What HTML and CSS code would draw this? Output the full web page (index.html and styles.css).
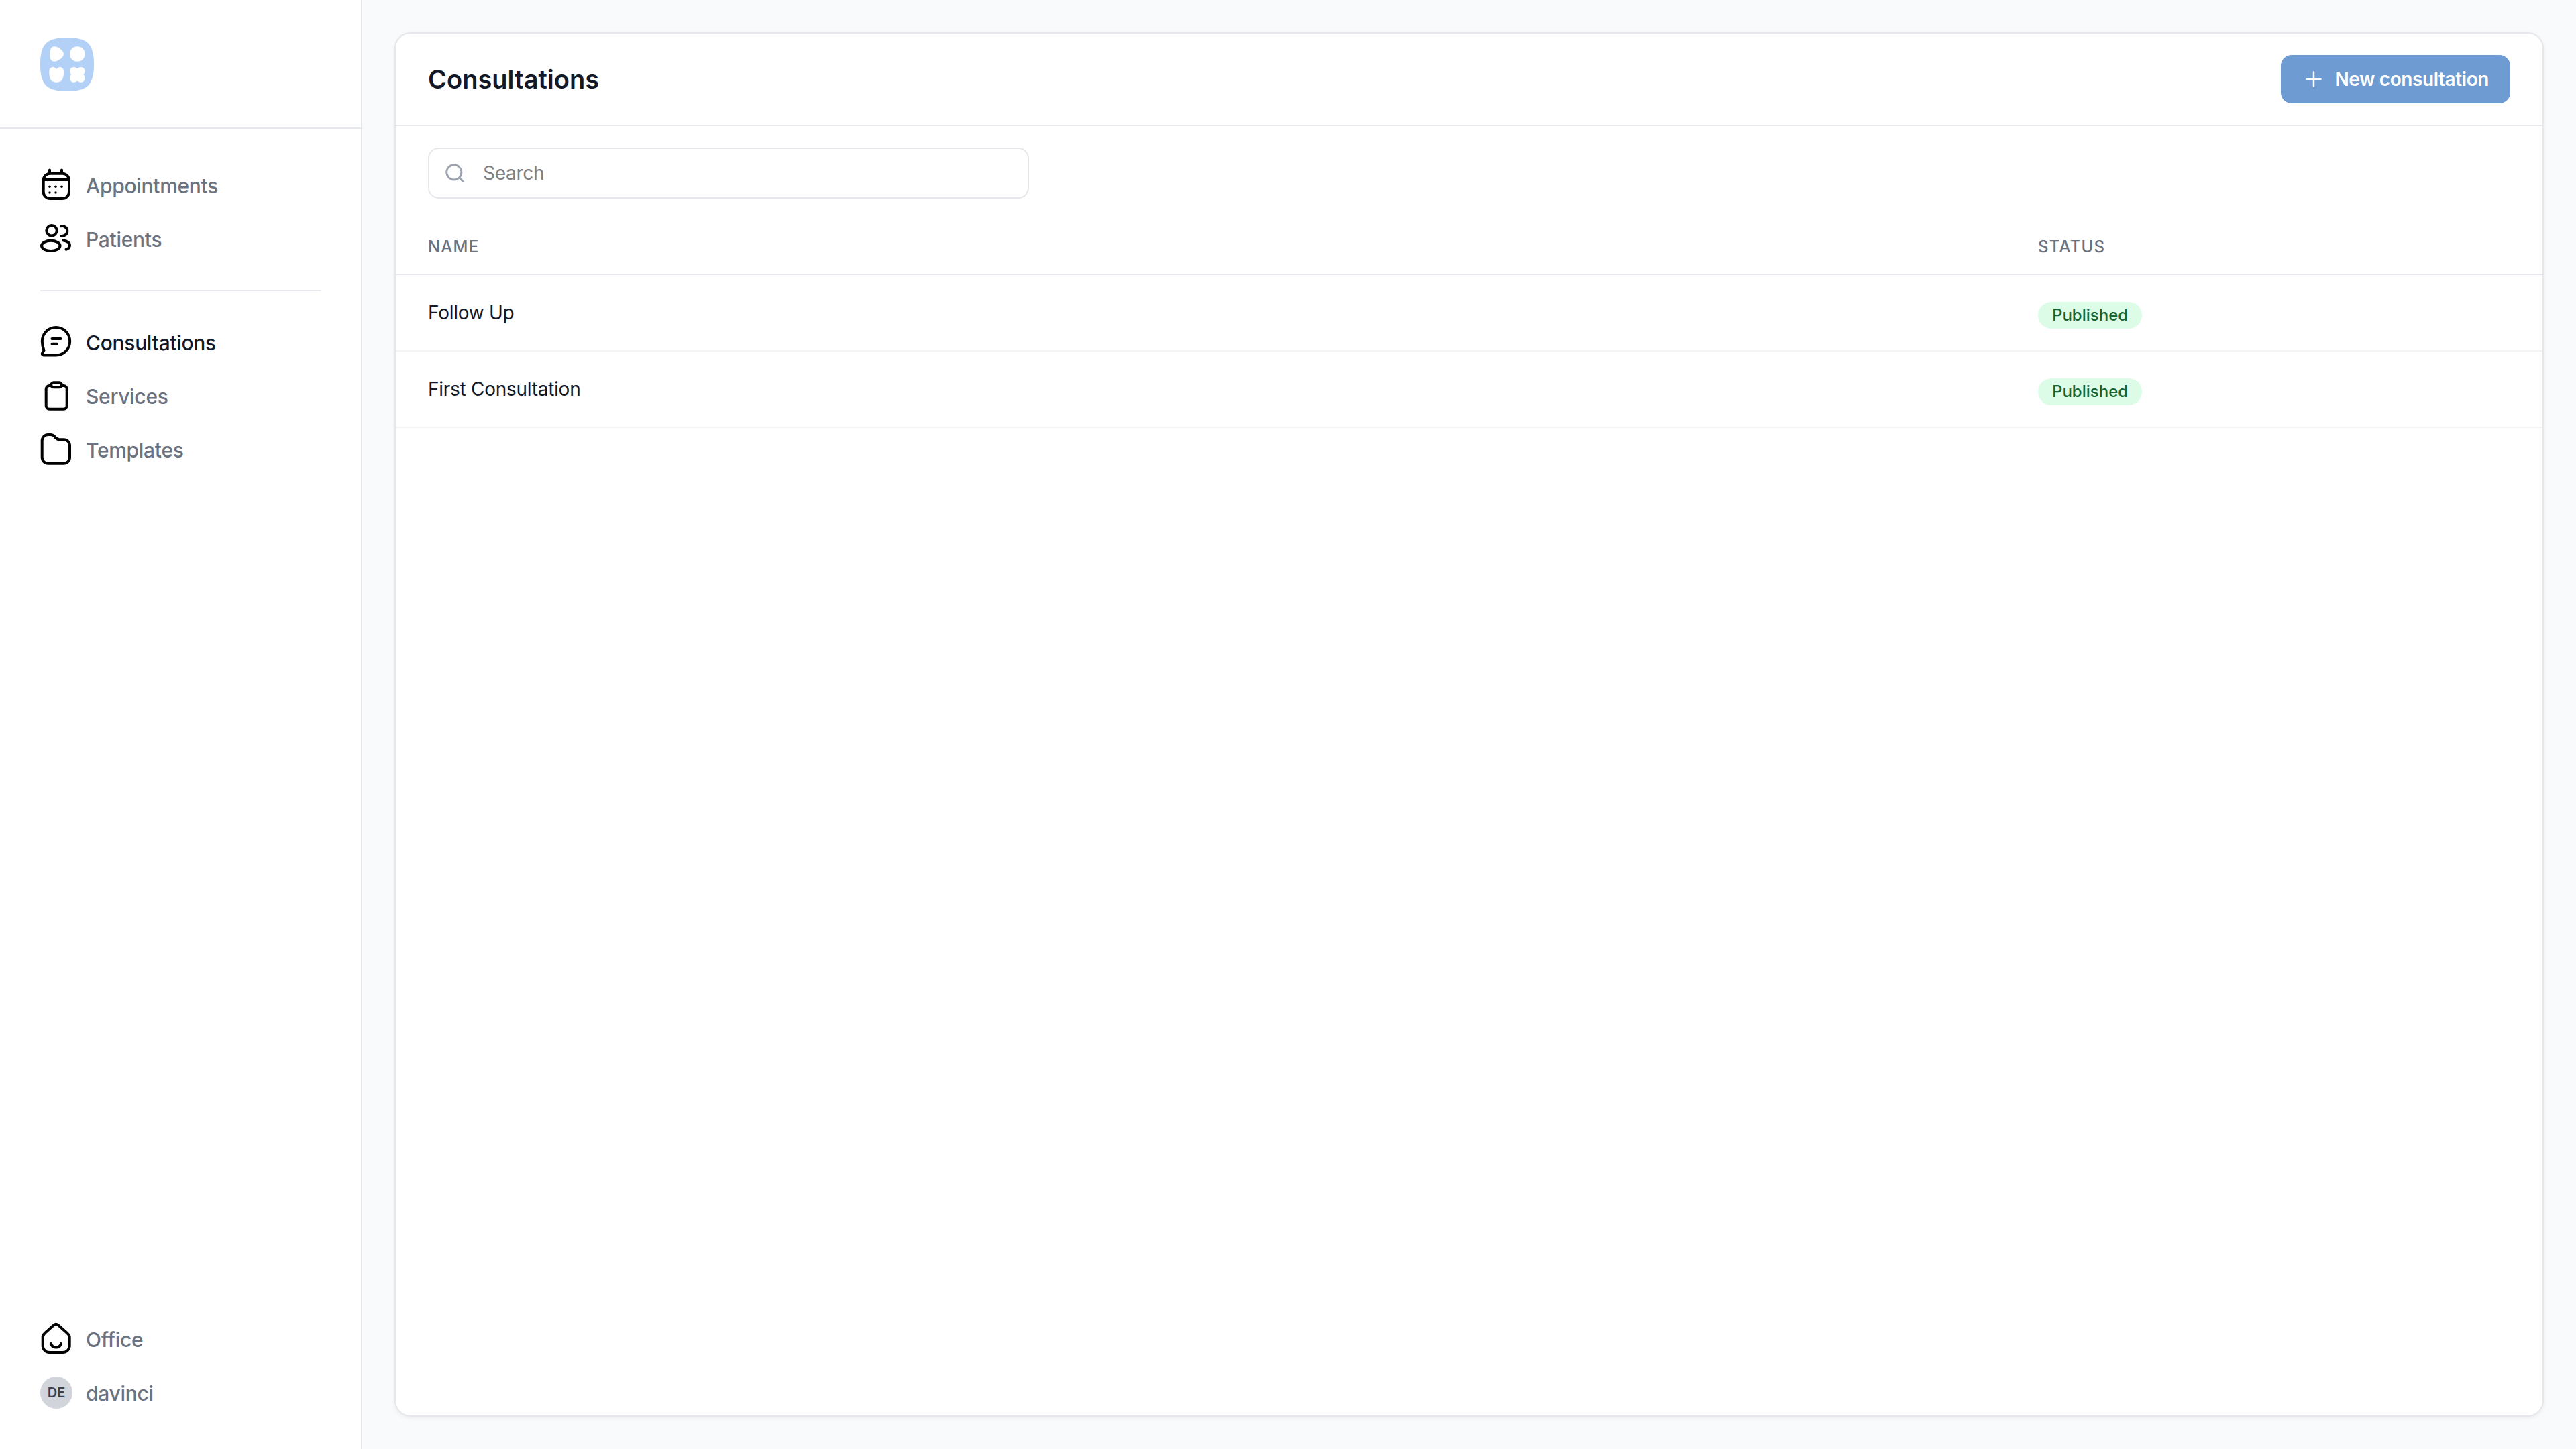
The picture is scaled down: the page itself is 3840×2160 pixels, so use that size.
FILE: index.html
```html
<!DOCTYPE html>
<html lang="en">
<head>
<meta charset="utf-8">
<title>Consultations</title>
<link rel="stylesheet" href="styles.css">
</head>
<body>
<div class="app">
  <aside class="sidebar">
    <div class="brand">
      <svg class="logo" viewBox="0 0 80 80">
        <path fill="#b3d1f6" d="M40 0C70 0 80 9 80 40C80 71 70 80 40 80C10 80 0 71 0 40C0 9 10 0 40 0Z"/>
        <path fill="#fff" d="M21 13.300C27 13.300 35 20 35 24.500C35 29 27 35.700 20.500 35.700C16 35.700 14.300 31 14.300 24.500C14.300 18 16 13.300 21 13.300Z"/>
        <ellipse fill="#fff" cx="55.300" cy="24.500" rx="11.400" ry="11.200"/>
        <path fill="#fff" d="M13.300 51C13.300 46 16 44 19 44C21.500 44 23 45.500 24.200 47C25.400 45.500 27 44 29.500 44C33 44 35 47 35 51C35 62 32 66.700 24.200 66.700C16.400 66.700 13.300 62 13.300 51Z"/>
        <path fill="#fff" d="M50 44C52.500 44 54 45 55.300 46.300C56.600 45 58.200 44 60.500 44C64 44 66.700 46.800 66.700 50C66.700 52.400 65.600 54 64.500 55.300C65.600 56.700 66.700 58.200 66.700 60.700C66.700 64 64 66.700 60.500 66.700C58.200 66.700 56.600 65.600 55.300 64.400C54 65.600 52.500 66.700 50 66.700C46.600 66.700 44 64 44 60.700C44 58.200 45 56.700 46.200 55.300C45 54 44 52.400 44 50C44 46.800 46.600 44 50 44Z"/>
      </svg>
    </div>
    <nav class="nav">
      <a class="nav-item">
        <svg class="icon" viewBox="0 0 48 48"><rect x="4.700" y="6.700" width="38.300" height="37.300" rx="10"/><path d="M14 1.500V5.500M32 1.500V5.500M4.700 16H43"/><g class="dots"><circle cx="14" cy="26.300" r="1.700"/><circle cx="23" cy="26.300" r="1.700"/><circle cx="32" cy="26.300" r="1.700"/><circle cx="14" cy="35" r="1.700"/><circle cx="23" cy="35" r="1.700"/></g></svg>
        <span class="label">Appointments</span>
      </a>
      <a class="nav-item">
        <svg class="icon" viewBox="0 0 48 48"><circle cx="17" cy="11.800" r="7.700"/><ellipse cx="15.800" cy="34.300" rx="13.800" ry="7.600"/><path d="M31 5.200C36.500 4.500 40.300 8 40.300 12.500C40.300 17 36.500 20.500 31 20M34.500 26.500C40 27.500 44 30 44 33.300C44 36.300 42 39 38.500 39.700"/></svg>
        <span class="label">Patients</span>
      </a>
      <div class="nav-divider"></div>
      <a class="nav-item active">
        <svg class="icon" viewBox="0 0 48 48"><path d="M23.500 43.500H5.500C3 43.500 2.200 41.500 3.300 39.800L5.500 36.200C3.800 32.500 2.800 27.500 2.800 22.800A20.700 20.700 0 1 1 23.500 43.500Z"/><path d="M17.500 19H30.500M17.500 26.700H25"/></svg>
        <span class="label">Consultations</span>
      </a>
      <a class="nav-item">
        <svg class="icon" viewBox="0 0 48 48"><rect x="8.700" y="9" width="31" height="34.700" rx="5"/><rect class="white" x="16.300" y="4.300" width="15.700" height="7" rx="3.500"/></svg>
        <span class="label">Services</span>
      </a>
      <a class="nav-item">
        <svg class="icon" viewBox="0 0 48 48"><path d="M2.700 11A9 9 0 0 1 11.700 2H15C18.500 2 20 3 21.500 5C23.500 7.800 25 9.300 28.500 9.300H35A9 9 0 0 1 44 18.300V35.700A9 9 0 0 1 35 44.700H11.700A9 9 0 0 1 2.700 35.700Z"/></svg>
        <span class="label">Templates</span>
      </a>
    </nav>
    <div class="nav nav-bottom">
      <a class="nav-item">
        <svg class="icon" viewBox="0 0 48 48"><path d="M20.500 3Q23.500 .8 26.500 3L40 15Q43.700 18 43.700 22V34A10 10 0 0 1 33.700 44H13.700A10 10 0 0 1 3.700 34V22Q3.700 18 7 15Z"/><path d="M15.800 31C17.300 35 20.300 36.500 23.500 36.500S29.700 35 31.200 31"/></svg>
        <span class="label">Office</span>
      </a>
      <a class="nav-item">
        <span class="avatar">DE</span>
        <span class="label">davinci</span>
      </a>
    </div>
  </aside>
  <main class="main">
    <section class="card">
      <header class="card-head">
        <h1>Consultations</h1>
        <button class="btn">
          <svg class="plus" viewBox="0 0 24 24"><path d="M12 1.500V22.500M1.500 12H22.500"/></svg>
          New consultation
        </button>
      </header>
      <div class="toolbar">
        <div class="search">
          <svg class="search-icon" viewBox="0 0 24 24"><circle cx="11" cy="11" r="9.500"/><path d="M18 18L22.500 23"/></svg>
          <span>Search</span>
        </div>
      </div>
      <div class="table">
        <div class="row head"><div>Name</div><div>Status</div></div>
        <div class="row item"><div class="name">Follow Up</div><div><span class="badge">Published</span></div></div>
        <div class="row item"><div class="name">First Consultation</div><div><span class="badge">Published</span></div></div>
      </div>
    </section>
  </main>
</div>
</body>
</html>
```
FILE: styles.css
```css
* { box-sizing: border-box; }
html, body { margin: 0; height: 100%; }
body { font-family: Inter, "Liberation Sans", sans-serif; background: #f9fafb; color: #111827; }
.app { display: flex; width: 3840px; height: 2160px; }

.sidebar { width: 540px; flex: none; background: #fff; border-right: 2px solid #e5e7eb; display: flex; flex-direction: column; }
.brand { height: 192px; flex: none; padding: 56px 0 0 60px; border-bottom: 2px solid #e5e7eb; }
.logo { display: block; width: 80px; height: 80px; }
.nav { padding: 44px 60px 0; }
.nav-bottom { margin-top: auto; padding: 0 60px 44px; }
.nav-item { display: flex; align-items: center; gap: 20px; height: 80px; font-size: 30px; font-weight: 500; letter-spacing: -.3px; color: #6b7280; }
.nav-item.active { color: #111827; }
.label { padding-top: 2px; }
.nav-divider { height: 2px; background: #e5e7eb; margin: 36px 0 36px; }

.icon { width: 48px; height: 48px; flex: none; overflow: visible; fill: none; stroke: #000; stroke-width: 4; stroke-linecap: round; stroke-linejoin: round; }
.icon .dots { fill: #000; stroke: none; }
.icon .white { fill: #fff; }
.avatar { width: 48px; height: 48px; flex: none; border-radius: 50%; background: #d1d5db; color: #374151; font-size: 20px; font-weight: 600; letter-spacing: 0; display: flex; align-items: center; justify-content: center; }

.main { flex: 1; min-width: 0; padding: 48px; display: flex; }
.card { flex: 1; min-width: 0; background: #fff; border: 2px solid #e5e7eb; border-radius: 24px; box-shadow: 0 2px 6px rgba(0,0,0,.06); }
.card-head { height: 138px; display: flex; align-items: center; justify-content: space-between; padding: 0 48px; border-bottom: 2px solid #e5e7eb; }
h1 { margin: 0; font-size: 38px; font-weight: 600; color: #111827; }
.btn { width: 342px; height: 72px; display: flex; align-items: center; justify-content: flex-end; gap: 20px; padding: 0 32px 0 0; border: 0; border-radius: 16px; background: #6d9bd2; color: #fff; font-family: inherit; font-size: 28px; font-weight: 600; letter-spacing: -.42px; }
.plus { width: 24px; height: 24px; fill: none; stroke: #fff; stroke-width: 2.500; stroke-linecap: round; }

.toolbar { padding: 32px 48px 0; }
.search { width: 896px; height: 76px; display: flex; align-items: center; gap: 28px; padding: 0 24px; border: 2px solid #e5e7eb; border-radius: 16px; font-size: 28px; letter-spacing: -.25px; color: #808080; }
.search-icon { width: 28px; height: 28px; flex: none; fill: none; stroke: #9ca3af; stroke-width: 2.500; stroke-linecap: round; }

.row { display: grid; grid-template-columns: 2400px 1fr; padding: 0 48px; align-items: center; }
.head { height: 114px; padding-top: 30px; border-bottom: 2px solid #e5e7eb; font-size: 24px; font-weight: 500; letter-spacing: 1.200px; text-transform: uppercase; color: #6b7280; }
.item { height: 114px; border-bottom: 2px solid #f3f4f6; font-size: 28px; letter-spacing: -.27px; color: #111827; }
.badge { display: inline-block; margin-top: 8px; padding: 0 21px; height: 40px; line-height: 40px; border-radius: 20px; background: #dcfce7; color: #166534; font-size: 24px; font-weight: 500; letter-spacing: 0; vertical-align: top; }
```
